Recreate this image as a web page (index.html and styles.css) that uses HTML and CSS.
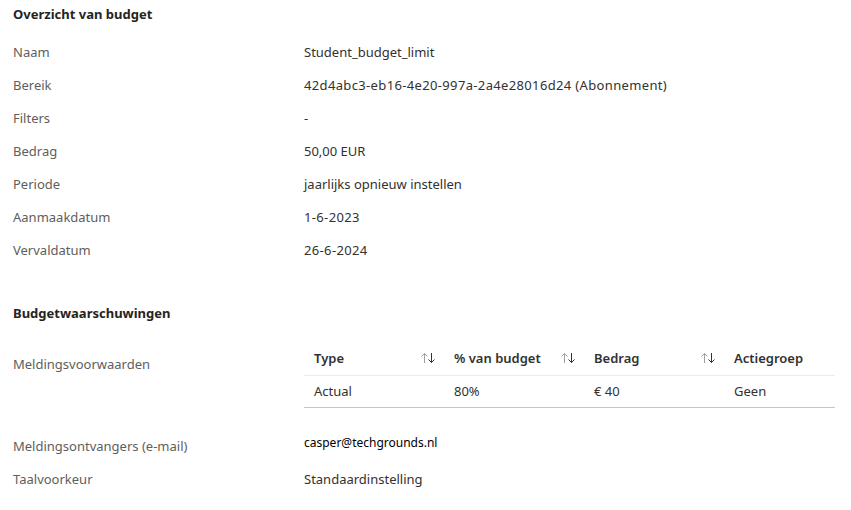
FILE: index.html
```html
<!DOCTYPE html>
<html lang="nl">
<head>
<meta charset="utf-8">
<title>Overzicht van budget</title>
<link rel="stylesheet" href="styles.css">
</head>
<body>
<main class="page">
  <section class="section">
    <h2 class="section-title">Overzicht van budget</h2>
    <dl class="props">
      <div class="prop"><dt>Naam</dt><dd>Student_budget_limit</dd></div>
      <div class="prop"><dt>Bereik</dt><dd class="mono-ish">42d4abc3-eb16-4e20-997a-2a4e28016d24 (Abonnement)</dd></div>
      <div class="prop"><dt>Filters</dt><dd>-</dd></div>
      <div class="prop"><dt>Bedrag</dt><dd>50,00 EUR</dd></div>
      <div class="prop"><dt>Periode</dt><dd>jaarlijks opnieuw instellen</dd></div>
      <div class="prop"><dt>Aanmaakdatum</dt><dd class="mono-ish">1-6-2023</dd></div>
      <div class="prop"><dt>Vervaldatum</dt><dd class="mono-ish">26-6-2024</dd></div>
    </dl>
  </section>

  <section class="section section-alerts">
    <h2 class="section-title">Budgetwaarschuwingen</h2>
    <div class="cond-row">
      <div class="cond-label">Meldingsvoorwaarden</div>
      <table class="grid">
        <thead>
          <tr>
            <th><span class="th-inner"><span>Type</span><svg class="sort" viewBox="0 0 16 12" width="16" height="12"><path class="up" d="M4.5 11V1.5M1.5 4.5L4.5 1.5L7.5 4.5"/><path class="down" d="M11.5 1V10.5M8.5 7.5L11.5 10.5L14.5 7.5"/></svg></span></th>
            <th><span class="th-inner"><span>% van budget</span><svg class="sort" viewBox="0 0 16 12" width="16" height="12"><path class="up" d="M4.5 11V1.5M1.5 4.5L4.5 1.5L7.5 4.5"/><path class="down" d="M11.5 1V10.5M8.5 7.5L11.5 10.5L14.5 7.5"/></svg></span></th>
            <th><span class="th-inner"><span>Bedrag</span><svg class="sort" viewBox="0 0 16 12" width="16" height="12"><path class="up" d="M4.5 11V1.5M1.5 4.5L4.5 1.5L7.5 4.5"/><path class="down" d="M11.5 1V10.5M8.5 7.5L11.5 10.5L14.5 7.5"/></svg></span></th>
            <th><span class="th-inner"><span>Actiegroep</span></span></th>
          </tr>
        </thead>
        <tbody>
          <tr>
            <td>Actual</td>
            <td>80%</td>
            <td>€ 40</td>
            <td>Geen</td>
          </tr>
        </tbody>
      </table>
    </div>
    <dl class="props props-after">
      <div class="prop"><dt>Meldingsontvangers (e-mail)</dt><dd class="email">casper@techgrounds.nl</dd></div>
      <div class="prop"><dt>Taalvoorkeur</dt><dd>Standaardinstelling</dd></div>
    </dl>
  </section>
</main>
</body>
</html>
```

FILE: styles.css
```css
* { box-sizing: border-box; }

html, body {
  margin: 0;
  padding: 0;
  background: #ffffff;
}

body {
  font-family: "Noto Sans", "Open Sans", "Liberation Sans", sans-serif;
  font-size: 13px;
  color: #323130;
}

.page {
  padding: 4px 16px 0 13px;
  width: 851px;
}

.section-title {
  margin: 0;
  font-size: 13px;
  line-height: 20px;
  font-weight: 700;
  color: #252423;
}

.props {
  margin: 11px 0 0 0;
  padding: 0;
}

.prop {
  display: grid;
  grid-template-columns: 291px 1fr;
  height: 33px;
  align-items: center;
}

.prop dt {
  color: #605e5c;
  line-height: 20px;
}

.prop dd {
  margin: 0;
  line-height: 20px;
  color: #323130;
}

.prop .mono-ish {
  letter-spacing: 0.35px;
}

.section-alerts {
  margin-top: 37px;
}

.cond-row {
  display: grid;
  grid-template-columns: 291px 531px;
  margin-top: 18px;
  align-items: start;
}

.cond-label {
  color: #605e5c;
  line-height: 20px;
  padding-top: 13px;
}

.grid {
  border-collapse: collapse;
  width: 531px;
  table-layout: fixed;
}

.grid th,
.grid td {
  text-align: left;
  padding: 0 8px 0 10px;
  white-space: nowrap;
}

.grid th {
  height: 34px;
  font-weight: 600;
  color: #323130;
  border-bottom: 1px solid #edebe9;
}

.grid td {
  height: 32px;
  color: #323130;
  border-bottom: 1px solid #c8c6c4;
}

.grid th:nth-child(1), .grid td:nth-child(1),
.grid th:nth-child(2), .grid td:nth-child(2),
.grid th:nth-child(3), .grid td:nth-child(3) { width: 140px; }

.th-inner {
  display: flex;
  align-items: center;
  justify-content: space-between;
}

.sort {
  fill: none;
  stroke-width: 1;
}
.sort .up { stroke: #a19f9d; }
.sort .down { stroke: #323130; }

.props-after {
  margin-top: 22px;
}

.prop .email {
  font-size: 12px;
  color: #000000;
  align-self: start;
  padding-top: 3px;
}
```
